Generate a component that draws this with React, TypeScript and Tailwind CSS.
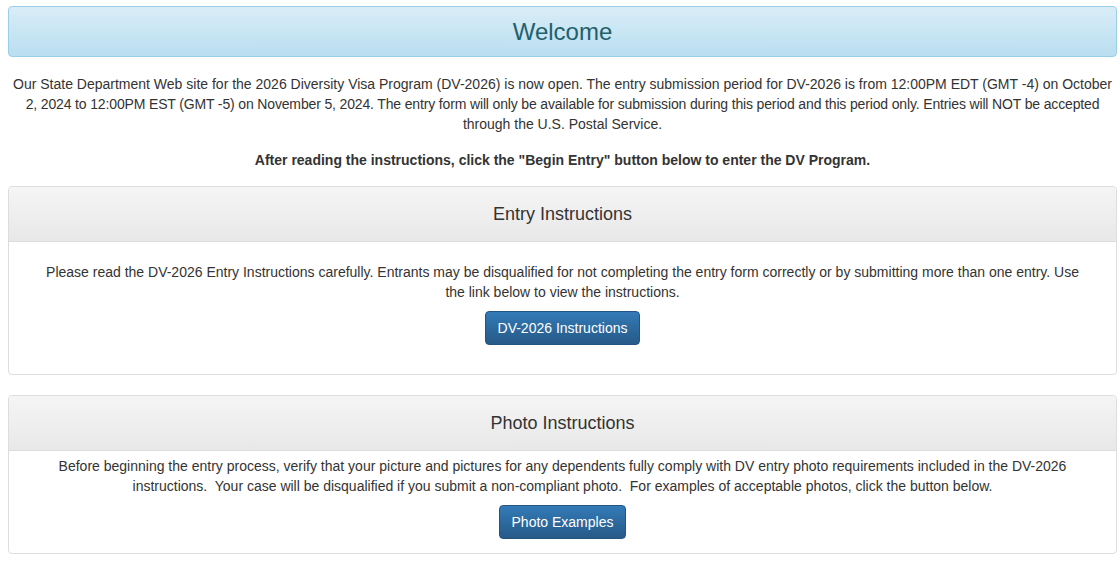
export default function App() {
  return (
    <div className="min-h-screen bg-white pl-2 pr-[3px] pt-1.5 font-['Liberation_Sans',Arial,sans-serif] text-[14px] leading-5 text-[#333]">
      <div className="flex h-[51px] items-center justify-center rounded border border-[#9acfea] bg-gradient-to-b from-[#d9edf7] to-[#b9def0] text-[24px] text-[#22606a]">
        Welcome
      </div>

      <p className="mt-[17px] px-[5px] text-center">
        Our State Department Web site for the 2026 Diversity Visa Program (DV-2026) is now open. The entry submission
        period for DV-2026 is from 12:00PM EDT (GMT -4) on October
        <br />
        <span className="tracking-[-0.15px]">
          2, 2024 to 12:00PM EST (GMT -5) on November 5, 2024. The entry form will only be available for submission
          during this period and this period only. Entries will NOT be accepted
        </span>
        <br />
        through the U.S. Postal Service.
      </p>

      <p className="mt-4 text-center font-bold">
        After reading the instructions, click the "Begin Entry" button below to enter the DV Program.
      </p>

      <div className="mt-4 rounded border border-[#ddd]">
        <div className="flex h-[55px] items-center justify-center rounded-t border-b border-[#ddd] bg-gradient-to-b from-[#f5f5f5] to-[#e8e8e8] text-[18px]">
          Entry Instructions
        </div>
        <div className="flex flex-col items-center px-[36px] pt-5 pb-[29px] text-center">
          <p>
            Please read the DV-2026 Entry Instructions carefully. Entrants may be disqualified for not completing the
            entry form correctly or by submitting more than one entry. Use the link below to view the instructions.
          </p>
          <button className="mt-[9px] h-[34px] rounded border border-[#245580] bg-gradient-to-b from-[#337ab7] to-[#265a88] px-3 text-white">
            DV-2026 Instructions
          </button>
        </div>
      </div>

      <div className="mt-[20px] rounded border border-[#ddd]">
        <div className="flex h-[55px] items-center justify-center rounded-t border-b border-[#ddd] bg-gradient-to-b from-[#f5f5f5] to-[#e8e8e8] text-[18px]">
          Photo Instructions
        </div>
        <div className="flex flex-col items-center px-[36px] pt-[5px] pb-[14px] text-center">
          <p className="whitespace-pre-wrap">
            {'Before beginning the entry process, verify that your picture and pictures for any dependents fully comply with DV entry photo requirements included in the DV-2026 instructions.  Your case will be disqualified if you submit a non-compliant photo.  For examples of acceptable photos, click the button below.'}
          </p>
          <button className="mt-[9px] h-[34px] rounded border border-[#245580] bg-gradient-to-b from-[#337ab7] to-[#265a88] px-3 text-white">
            Photo Examples
          </button>
        </div>
      </div>
    </div>
  );
}
